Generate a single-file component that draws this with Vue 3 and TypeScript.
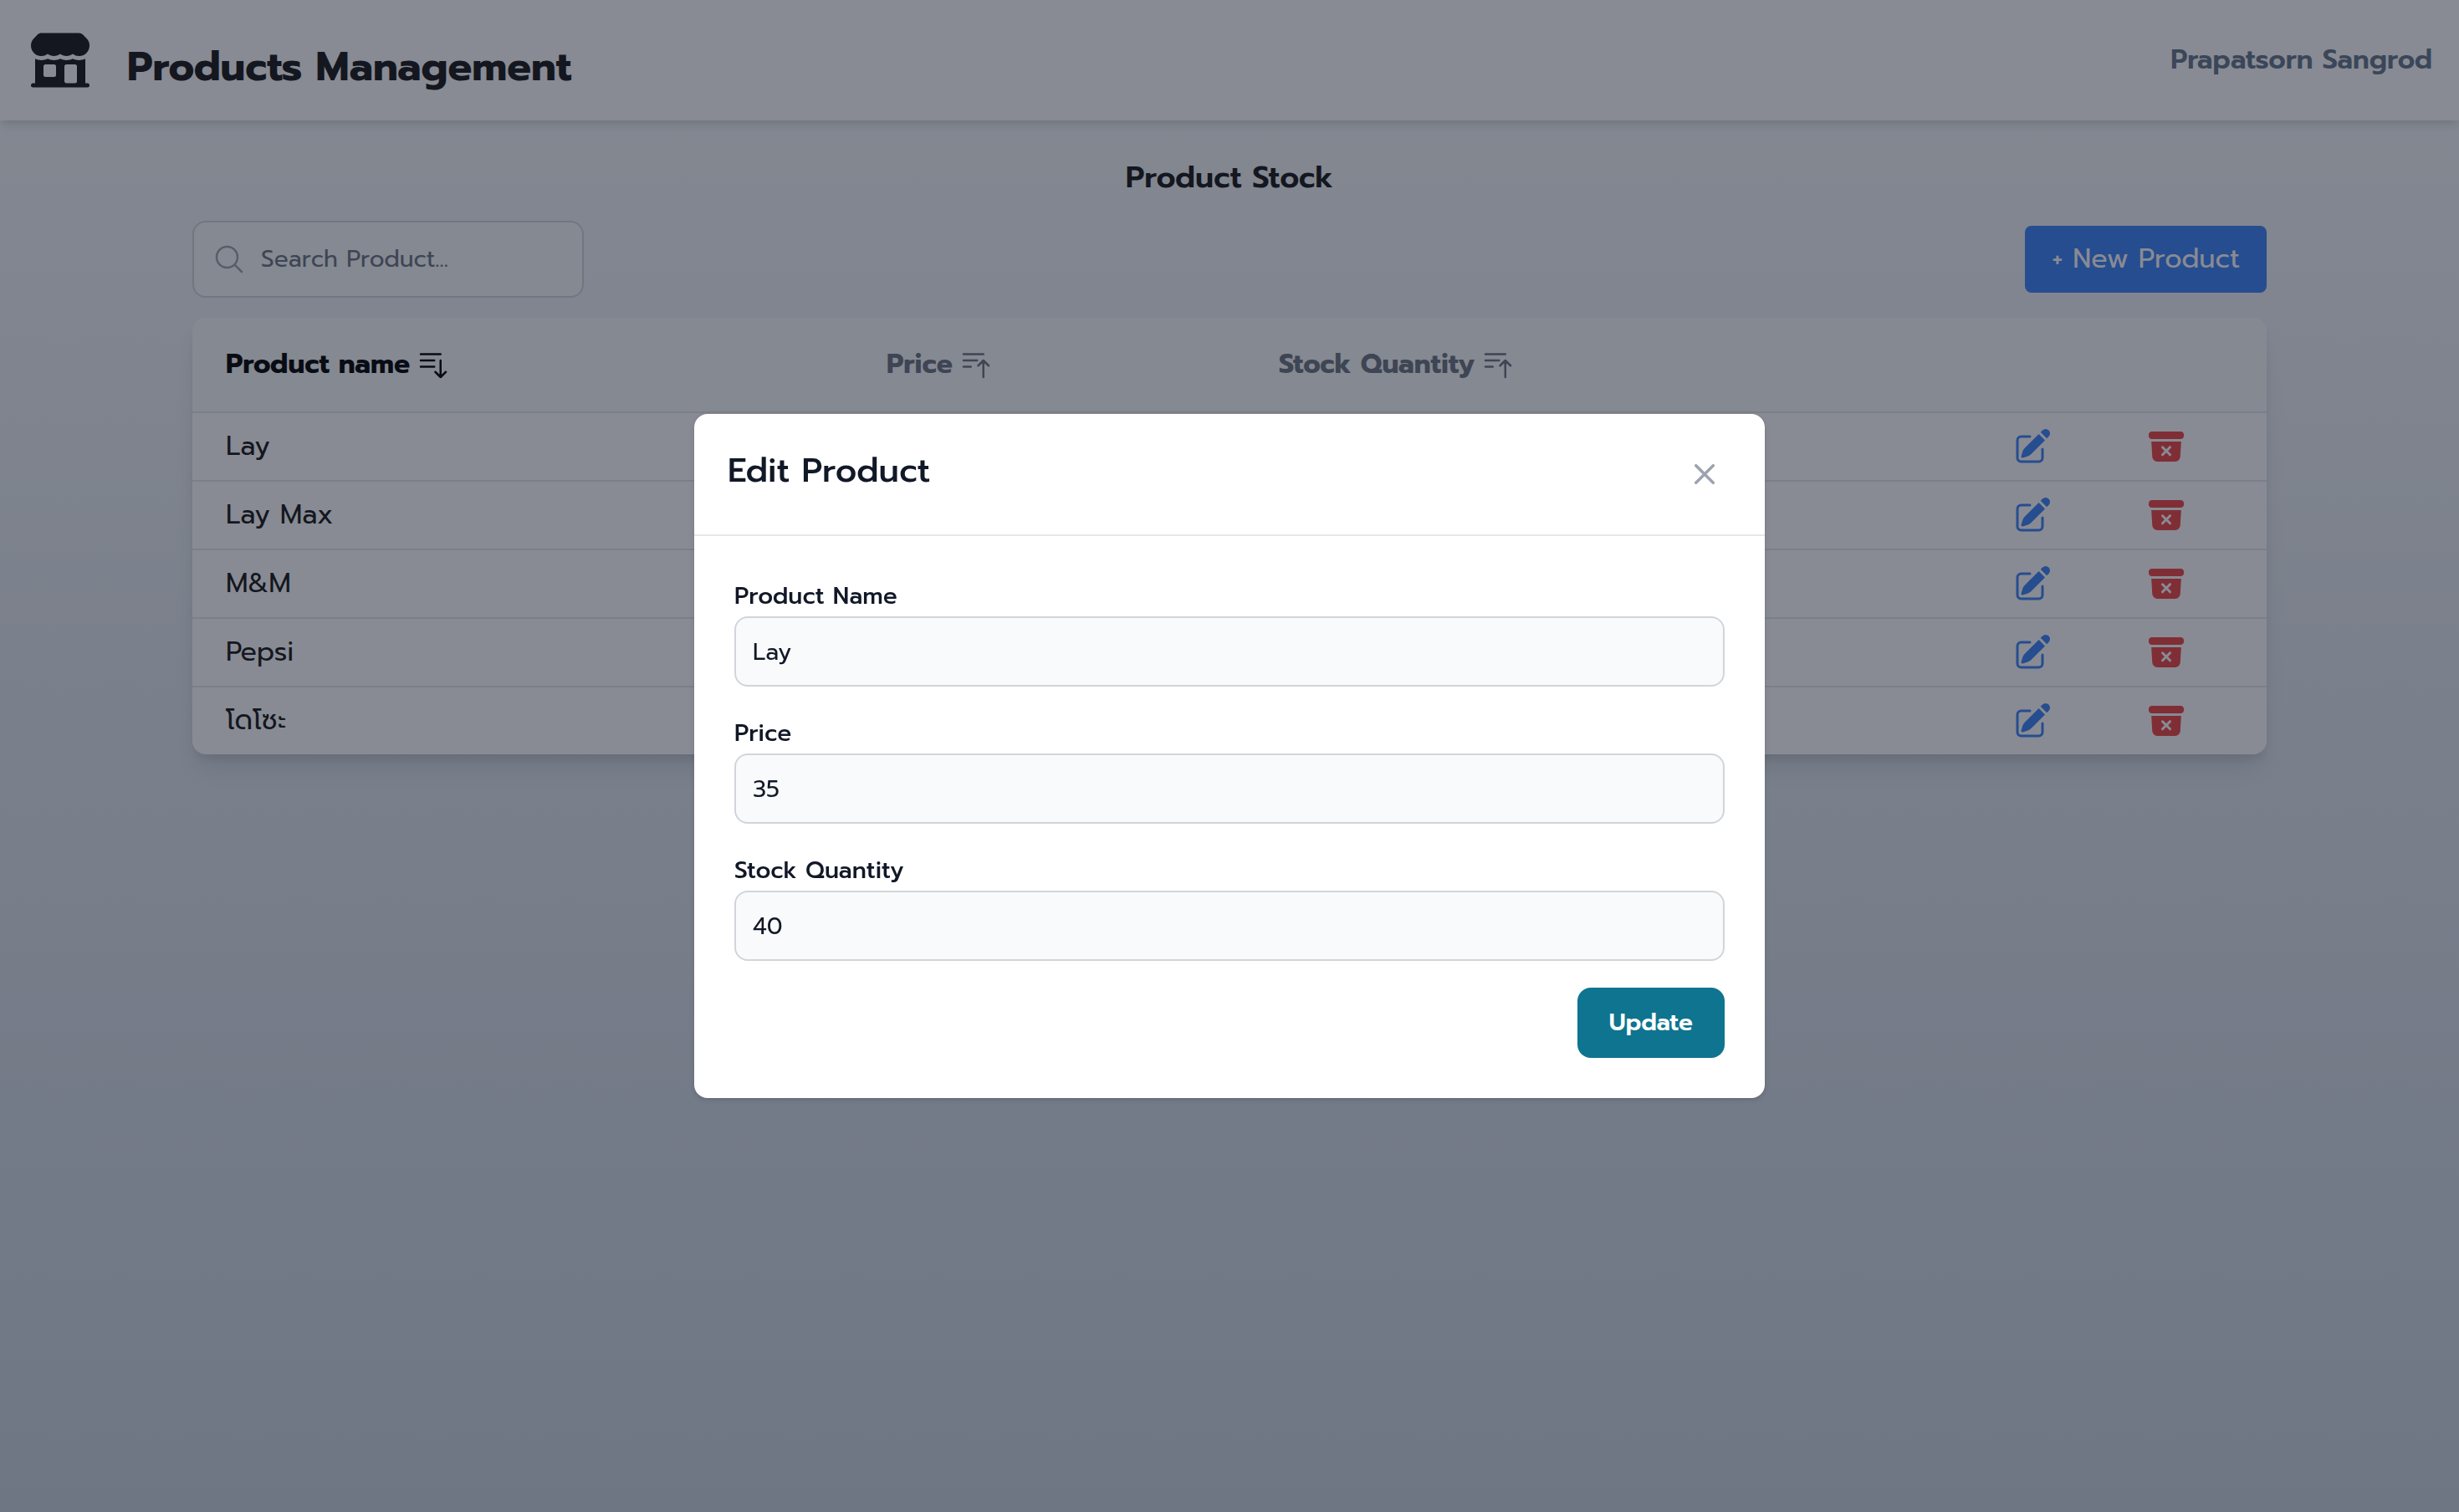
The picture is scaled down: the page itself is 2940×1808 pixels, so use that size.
<script setup lang="ts">
import { reactive, ref } from 'vue'

interface Column {
  key: string
  label: string
  sorted: boolean
}

const columns: Column[] = [
  { key: 'name', label: 'Product name', sorted: true },
  { key: 'price', label: 'Price', sorted: false },
  { key: 'stock', label: 'Stock Quantity', sorted: false },
]

const products: string[] = ['Lay', 'Lay Max', 'M&M', 'Pepsi', 'โดโซะ']

const search = ref('')
const form = reactive({ name: 'Lay', price: '35', stock: '40' })
</script>

<template>
  <div class="page">
    <header class="topbar">
      <svg class="logo" viewBox="0 0 24 24" fill="currentColor" aria-hidden="true">
        <path d="M5.223 2.25c-.497 0-.974.198-1.325.55l-1.3 1.298A3.75 3.75 0 0 0 7.5 9.75c.627.47 1.406.75 2.25.75.844 0 1.624-.28 2.25-.75.626.47 1.406.75 2.25.75.844 0 1.623-.28 2.25-.75a3.75 3.75 0 0 0 4.902-5.652l-1.3-1.299a1.875 1.875 0 0 0-1.325-.549H5.223Z" />
        <path fill-rule="evenodd" clip-rule="evenodd" d="M3 20.25v-8.755c1.42.674 3.08.673 4.5 0A5.234 5.234 0 0 0 9.75 12c.804 0 1.568-.182 2.25-.506a5.234 5.234 0 0 0 2.25.506c.804 0 1.567-.182 2.25-.506 1.42.674 3.08.675 4.5.001v8.755h.75a.75.75 0 0 1 0 1.5H2.25a.75.75 0 0 1 0-1.5H3Zm3-6a.75.75 0 0 1 .75-.75h3a.75.75 0 0 1 .75.75v3a.75.75 0 0 1-.75.75h-3a.75.75 0 0 1-.75-.75v-3Zm8.25-.75a.75.75 0 0 0-.75.75v5.25c0 .414.336.75.75.75h3a.75.75 0 0 0 .75-.75v-5.25a.75.75 0 0 0-.75-.75h-3Z" />
      </svg>
      <h1>Products Management</h1>
      <span class="user">Prapatsorn Sangrod</span>
    </header>

    <main class="content">
      <h2>Product Stock</h2>

      <div class="toolbar">
        <label class="search">
          <svg viewBox="0 0 24 24" fill="none" stroke="currentColor" stroke-width="1.5" stroke-linecap="round" stroke-linejoin="round" aria-hidden="true">
            <path d="m21 21-5.197-5.197m0 0A7.5 7.5 0 1 0 5.196 5.196a7.5 7.5 0 0 0 10.607 10.607Z" />
          </svg>
          <input v-model="search" type="text" placeholder="Search Product..." aria-label="Search Product" />
        </label>
        <button type="button" class="new-button">+ New Product</button>
      </div>

      <div class="card">
        <table>
          <colgroup>
            <col class="col-name" />
            <col class="col-price" />
            <col />
            <col class="col-edit" />
            <col class="col-delete" />
          </colgroup>
          <thead>
            <tr>
              <th v-for="column in columns" :key="column.key" scope="col">
                <button type="button" class="sort" :class="{ active: column.sorted }">
                  {{ column.label }}
                  <svg viewBox="0 0 24 24" fill="none" stroke="currentColor" stroke-width="1.5" stroke-linecap="round" stroke-linejoin="round" aria-hidden="true">
                    <path v-if="column.sorted" d="M3 4.5h14.25M3 9h9.75M3 13.5h9.75m4.5-4.5v12m0 0-3.75-3.75M17.25 21 21 17.25" />
                    <path v-else d="M3 4.5h14.25M3 9h9.75M3 13.5h5.25m5.25-.75L17.25 9m0 0L21 12.75M17.25 9v12" />
                  </svg>
                </button>
              </th>
              <th></th>
              <th></th>
            </tr>
          </thead>
          <tbody>
            <tr v-for="name in products" :key="name">
              <td>{{ name }}</td>
              <td></td>
              <td></td>
              <td>
                <button type="button" class="icon-button edit" :aria-label="`Edit ${name}`">
                  <svg viewBox="0 0 24 24" fill="currentColor" aria-hidden="true">
                    <path d="M21.731 2.269a2.625 2.625 0 0 0-3.712 0l-1.157 1.157 3.712 3.712 1.157-1.157a2.625 2.625 0 0 0 0-3.712ZM19.513 8.199l-3.712-3.712-8.4 8.4a5.25 5.25 0 0 0-1.32 2.214l-.8 2.685a.75.75 0 0 0 .933.933l2.685-.8a5.25 5.25 0 0 0 2.214-1.32l8.4-8.4Z" />
                    <path d="M5.25 5.25a3 3 0 0 0-3 3v10.5a3 3 0 0 0 3 3h10.5a3 3 0 0 0 3-3V13.5a.75.75 0 0 0-1.5 0v5.25a1.5 1.5 0 0 1-1.5 1.5H5.25a1.5 1.5 0 0 1-1.5-1.5V8.25a1.5 1.5 0 0 1 1.5-1.5h5.25a.75.75 0 0 0 0-1.5H5.25Z" />
                  </svg>
                </button>
              </td>
              <td>
                <button type="button" class="icon-button delete" :aria-label="`Delete ${name}`">
                  <svg viewBox="0 0 24 24" fill="currentColor" aria-hidden="true">
                    <path d="M3.375 3C2.339 3 1.5 3.84 1.5 4.875v.75c0 1.036.84 1.875 1.875 1.875h17.25c1.035 0 1.875-.84 1.875-1.875v-.75C22.5 3.839 21.66 3 20.625 3H3.375Z" />
                    <path fill-rule="evenodd" clip-rule="evenodd" d="m3.087 9 .54 9.176A3 3 0 0 0 6.62 21h10.757a3 3 0 0 0 2.995-2.824L20.913 9H3.087Zm6.133 2.845a.75.75 0 0 1 1.06 0l1.72 1.72 1.72-1.72a.75.75 0 1 1 1.06 1.06l-1.72 1.72 1.72 1.72a.75.75 0 1 1-1.06 1.06L12 15.685l-1.72 1.72a.75.75 0 1 1-1.06-1.06l1.72-1.72-1.72-1.72a.75.75 0 0 1 0-1.06Z" />
                  </svg>
                </button>
              </td>
            </tr>
          </tbody>
        </table>
      </div>
    </main>

    <div class="overlay">
      <section class="dialog" role="dialog" aria-modal="true" aria-labelledby="dialog-title">
        <div class="dialog-head">
          <h3 id="dialog-title">Edit Product</h3>
          <button type="button" class="close" aria-label="Close">
            <svg viewBox="0 0 14 14" fill="none" stroke="currentColor" stroke-width="2" stroke-linecap="round" stroke-linejoin="round" aria-hidden="true">
              <path d="m1 1 6 6m0 0 6 6M7 7l6-6M7 7l-6 6" />
            </svg>
          </button>
        </div>
        <form class="dialog-body" @submit.prevent>
          <div class="field">
            <label for="product-name">Product Name</label>
            <input id="product-name" v-model="form.name" type="text" />
          </div>
          <div class="field">
            <label for="product-price">Price</label>
            <input id="product-price" v-model="form.price" type="text" inputmode="numeric" />
          </div>
          <div class="field">
            <label for="product-stock">Stock Quantity</label>
            <input id="product-stock" v-model="form.stock" type="text" inputmode="numeric" />
          </div>
          <button type="submit" class="update">Update</button>
        </form>
      </section>
    </div>
  </div>
</template>

<style>
body {
  margin: 0;
}
</style>

<style scoped>
.page,
.page * {
  box-sizing: border-box;
}

.page {
  min-height: 100vh;
  background: linear-gradient(to bottom, #f8fafc, #cbd5e1);
  color: #171717;
  font-family: Prompt, Inter, 'Noto Sans Thai', 'Noto Sans', sans-serif;
  font-size: 32px;
  line-height: 48px;
}

button,
input {
  font: inherit;
  color: inherit;
}

button {
  margin: 0;
  padding: 0;
  border: 0;
  background: none;
}

svg {
  display: block;
  flex: none;
}

h1,
h2,
h3 {
  margin: 0;
}

.topbar {
  display: flex;
  align-items: flex-start;
  height: 144px;
  padding: 32px;
  background: #fff;
  box-shadow: 0 8px 12px -2px rgb(0 0 0 / 10%), 0 4px 8px -4px rgb(0 0 0 / 10%);
}

.logo {
  width: 80px;
  height: 80px;
}

h1 {
  margin-left: 40px;
  padding-top: 16px;
  font-size: 48px;
  line-height: 64px;
  font-weight: 700;
}

.user {
  margin-left: auto;
  padding-top: 16px;
  font-weight: 600;
  color: #64748b;
}

.content {
  max-width: 2560px;
  margin: 0 auto;
  padding: 40px;
}

h2 {
  margin-bottom: 24px;
  font-size: 36px;
  line-height: 56px;
  font-weight: 600;
  text-align: center;
}

.toolbar {
  display: flex;
  align-items: center;
  justify-content: space-between;
  margin-bottom: 24px;
}

.search {
  display: flex;
  align-items: center;
  gap: 18px;
  width: 468px;
  height: 92px;
  padding: 0 22px;
  border: 2px solid #d1d5db;
  border-radius: 16px;
  background: #f9fafb;
  color: #9ca3af;
}

.search svg {
  width: 40px;
  height: 40px;
}

.search input {
  flex: 1;
  min-width: 0;
  padding: 0;
  border: 0;
  outline: 0;
  background: none;
  font-size: 28px;
  color: #111827;
}

.search input::placeholder {
  color: #6b7280;
  opacity: 1;
}

.new-button {
  height: 80px;
  padding: 0 32px;
  border-radius: 8px;
  background: #3b82f6;
  color: #fff;
}

.card {
  overflow: hidden;
  border-radius: 16px;
  background: #fff;
  box-shadow: 0 20px 30px -6px rgb(0 0 0 / 10%), 0 8px 12px -4px rgb(0 0 0 / 10%);
}

table {
  width: 100%;
  border-collapse: separate;
  border-spacing: 0;
  table-layout: fixed;
}

.col-name {
  width: 790px;
}

.col-price {
  width: 469px;
}

.col-edit {
  width: 160px;
}

.col-delete {
  width: 184px;
}

th {
  padding: 32px 40px;
  border-bottom: 2px solid #e5e7eb;
  background: #f9fafb;
  text-align: left;
}

.sort {
  display: flex;
  align-items: center;
  gap: 8px;
  font-weight: 700;
  color: #6b7280;
}

.sort.active {
  color: #000;
}

.sort svg {
  width: 40px;
  height: 40px;
}

td {
  height: 82px;
  padding: 0 40px;
  border-bottom: 2px solid #e5e7eb;
}

tr:last-child td {
  height: 80px;
  border-bottom: 0;
}

.icon-button {
  display: block;
}

.icon-button svg {
  width: 48px;
  height: 48px;
}

.edit {
  color: #3b82f6;
}

.delete {
  color: #ef4444;
}

.overlay {
  position: fixed;
  inset: 0;
  display: flex;
  align-items: center;
  justify-content: center;
  background: rgb(17 24 39 / 50%);
}

.dialog {
  width: 1280px;
  max-width: 100%;
  border-radius: 16px;
  background: #fff;
  color: #111827;
  box-shadow: 0 2px 6px rgb(0 0 0 / 10%), 0 2px 4px -2px rgb(0 0 0 / 10%);
}

.dialog-head {
  display: flex;
  align-items: flex-start;
  justify-content: space-between;
  padding: 40px;
  border-bottom: 2px solid #e5e7eb;
}

h3 {
  font-size: 40px;
  line-height: 56px;
  font-weight: 500;
}

.close {
  display: flex;
  align-items: center;
  justify-content: center;
  width: 64px;
  height: 64px;
  color: #9ca3af;
}

.close svg {
  width: 24px;
  height: 24px;
}

.dialog-body {
  display: flex;
  flex-direction: column;
  gap: 32px;
  padding: 48px;
  font-size: 28px;
}

.field {
  display: flex;
  flex-direction: column;
}

.field label {
  font-weight: 500;
}

.field input {
  height: 84px;
  padding: 0 20px;
  border: 2px solid #d1d5db;
  border-radius: 16px;
  background: #f9fafb;
}

.update {
  align-self: flex-end;
  height: 84px;
  padding: 0 38px;
  border-radius: 16px;
  background: #0e7490;
  color: #fff;
  font-weight: 600;
}
</style>
